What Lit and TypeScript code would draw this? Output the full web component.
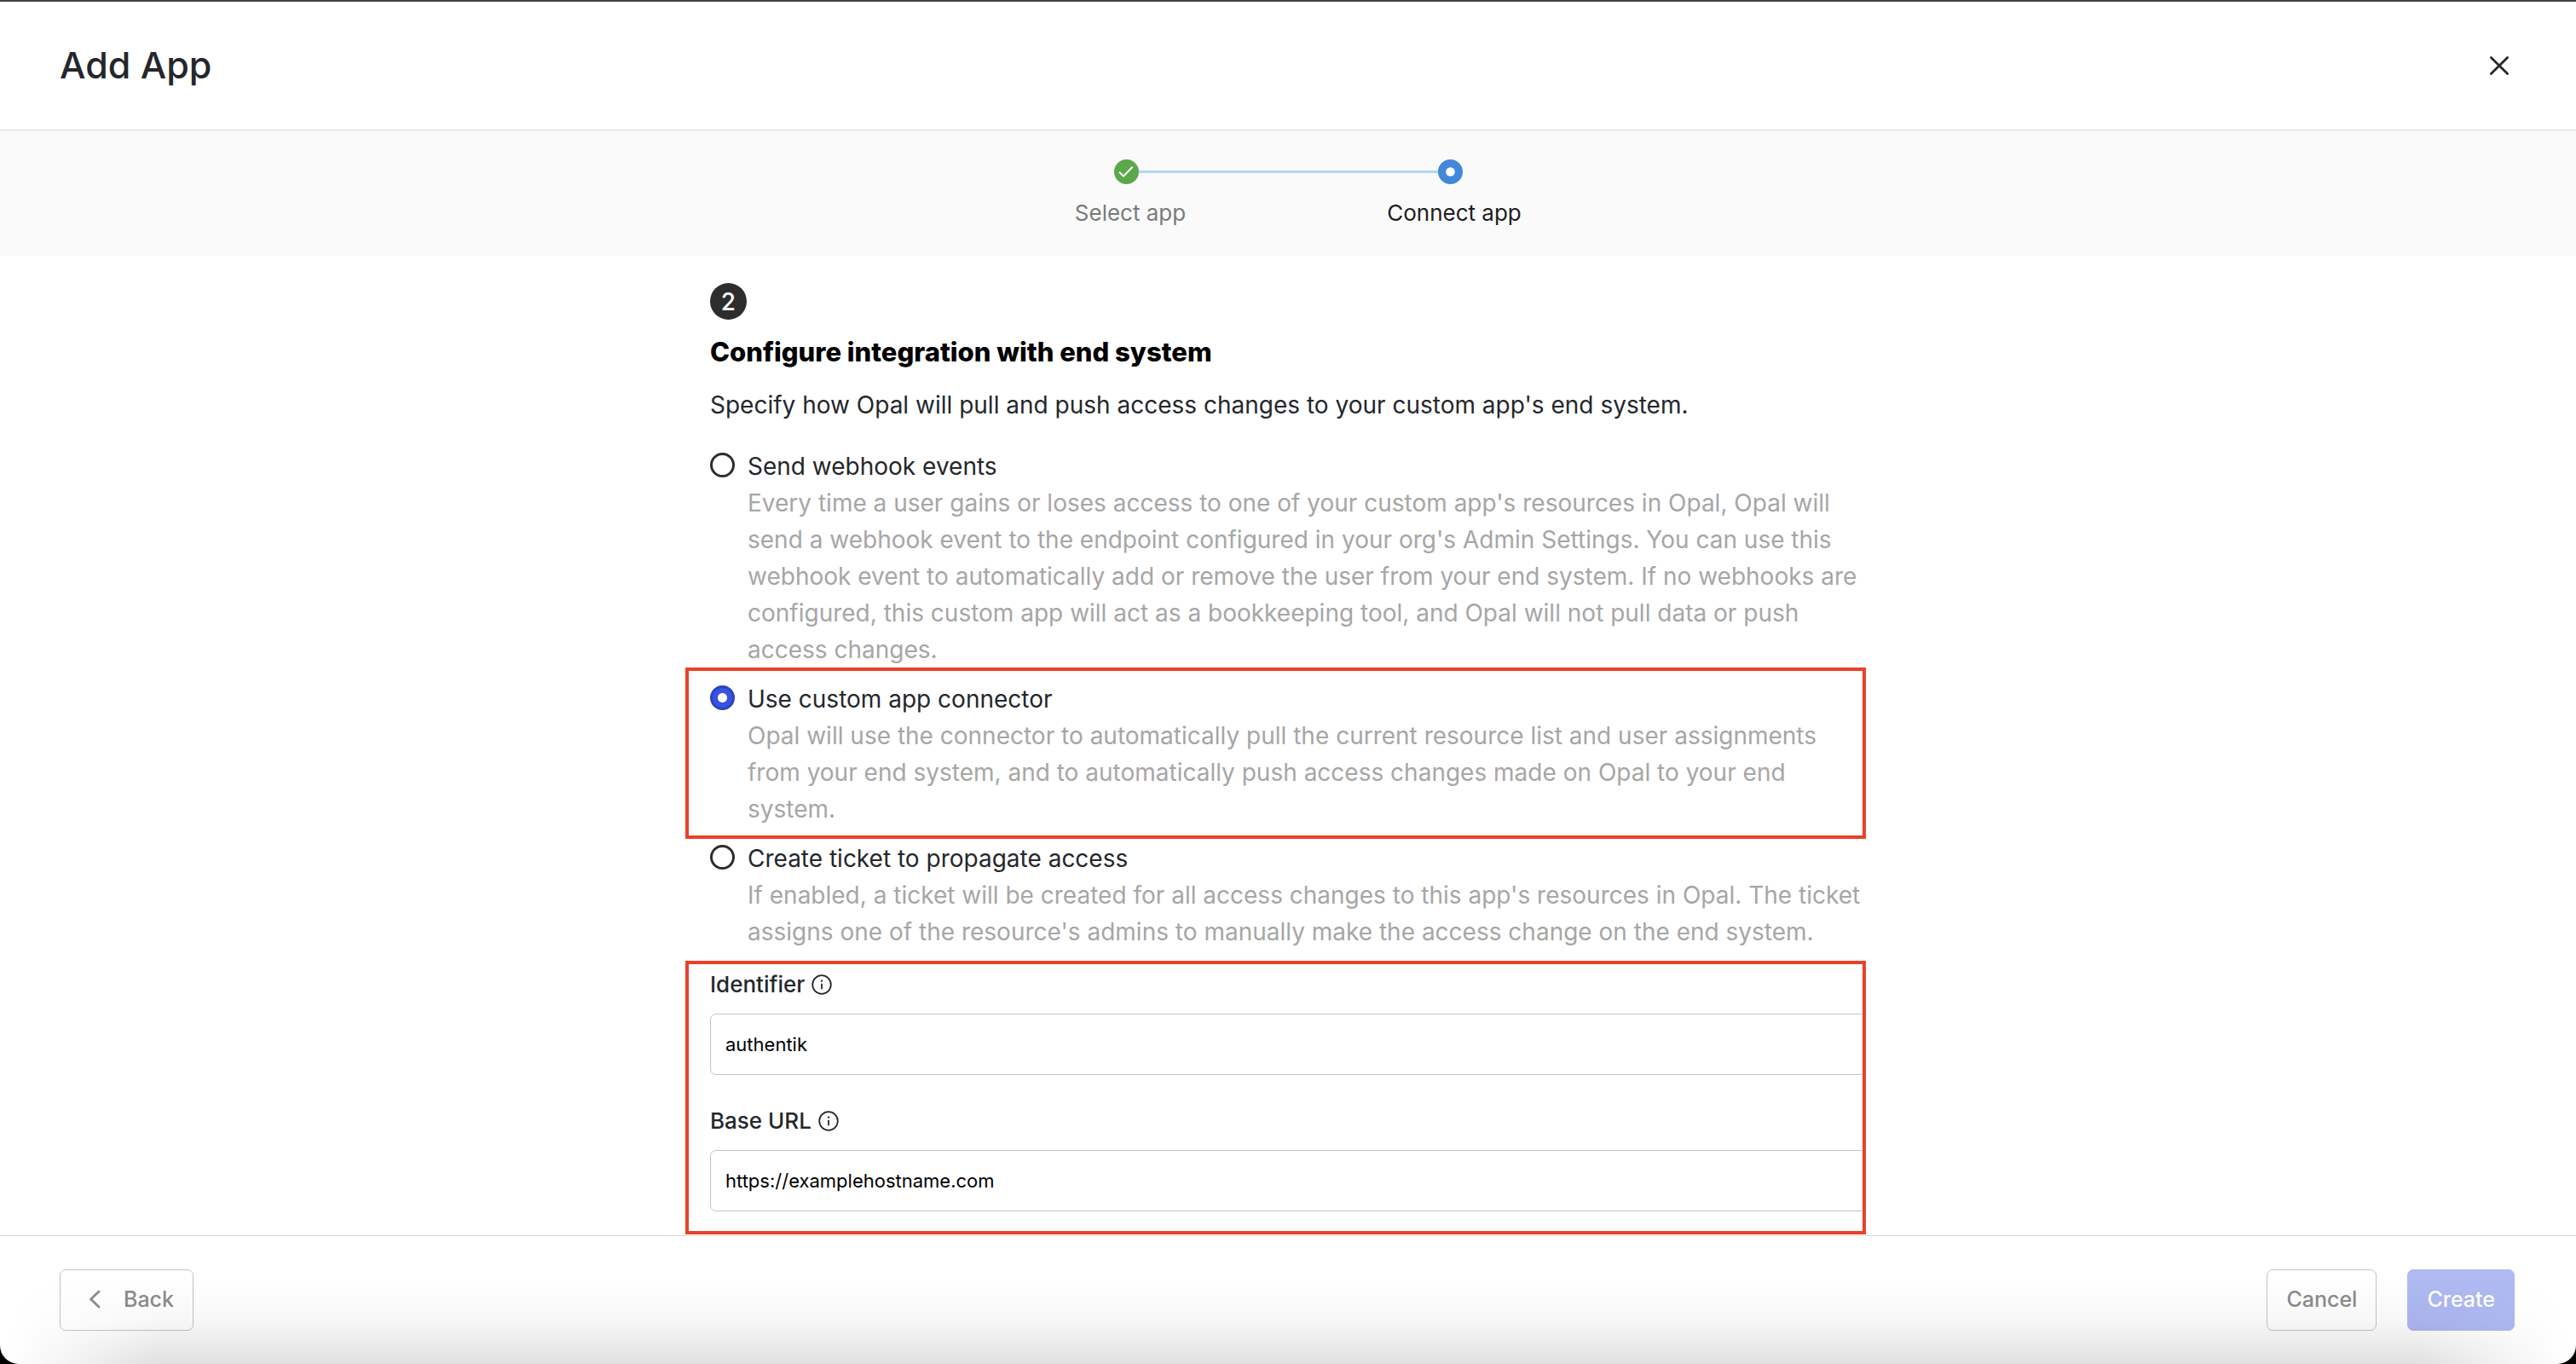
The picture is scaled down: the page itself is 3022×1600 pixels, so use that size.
import { LitElement, html, css, svg } from "lit";
import { customElement, property, state } from "lit/decorators.js";

interface Option {
  id: string;
  title: string;
  text: string;
  framed?: boolean;
}

const OPTIONS: Option[] = [
  {
    id: "webhook",
    title: "Send webhook events",
    text: "Every time a user gains or loses access to one of your custom app's resources in Opal, Opal will send a webhook event to the endpoint configured in your org's Admin Settings. You can use this webhook event to automatically add or remove the user from your end system. If no webhooks are configured, this custom app will act as a bookkeeping tool, and Opal will not pull data or push access changes.",
  },
  {
    id: "connector",
    title: "Use custom app connector",
    text: "Opal will use the connector to automatically pull the current resource list and user assignments from your end system, and to automatically push access changes made on Opal to your end system.",
    framed: true,
  },
  {
    id: "ticket",
    title: "Create ticket to propagate access",
    text: "If enabled, a ticket will be created for all access changes to this app's resources in Opal. The ticket assigns one of the resource's admins to manually make the access change on the end system.",
  },
];

const FIELDS = [
  { id: "identifier", label: "Identifier", value: "authentik" },
  { id: "base-url", label: "Base URL", value: "https://examplehostname.com" },
];

const infoIcon = svg`<svg viewBox="0 0 24 24" width="24" height="24" fill="none" aria-hidden="true">
  <circle cx="12" cy="12" r="10.8" stroke="#24272c" stroke-width="1.8"/>
  <circle cx="12" cy="7.6" r="1.2" fill="#24272c"/>
  <path d="M12 10.8v6.4" stroke="#24272c" stroke-width="1.8"/>
</svg>`;

@customElement("app-stepper")
export class AppStepper extends LitElement {
  static styles = css`
    :host {
      display: block;
      background: #fafafa;
    }
    .steps {
      list-style: none;
      margin: 0;
      padding: 34px 0 32px;
      display: flex;
      justify-content: center;
    }
    .step {
      flex: 0 1 380px;
      display: flex;
      flex-direction: column;
      gap: 16px;
    }
    .track {
      display: flex;
      align-items: center;
    }
    .line {
      flex: 1;
      height: 3px;
    }
    .on {
      background: #b3d6f8;
    }
    .marker {
      display: block;
      flex: none;
    }
    .label {
      padding-left: 10px;
      text-align: center;
      font-size: 26px;
      line-height: 36px;
      color: #7a7a7a;
    }
    .current {
      color: #1d1d1f;
    }
  `;

  render() {
    return html`
      <ol class="steps">
        <li class="step">
          <div class="track">
            <span class="line"></span>
            <svg class="marker" viewBox="0 0 29 29" width="29" height="29" fill="none" aria-hidden="true">
              <circle cx="14.5" cy="14.5" r="14.5" fill="#5ba84c" />
              <path d="M6 14.8l5 4.8L21.6 8.8" stroke="#fff" stroke-width="2" />
            </svg>
            <span class="line on"></span>
          </div>
          <span class="label">Select app</span>
        </li>
        <li class="step" aria-current="step">
          <div class="track">
            <span class="line on"></span>
            <svg class="marker" viewBox="0 0 29 29" width="29" height="29" aria-hidden="true">
              <circle cx="14.5" cy="14.5" r="14.5" fill="#4387d9" />
              <circle cx="14.5" cy="14.5" r="5.3" fill="#fff" />
            </svg>
            <span class="line"></span>
          </div>
          <span class="label current">Connect app</span>
        </li>
      </ol>
    `;
  }
}

@customElement("integration-form")
export class IntegrationForm extends LitElement {
  @property() selected = "connector";

  static styles = css`
    :host {
      display: block;
      max-width: 1356px;
      margin: 0 auto;
      padding: 32px 48px;
    }
    .badge {
      display: flex;
      align-items: center;
      justify-content: center;
      width: 43px;
      height: 43px;
      border-radius: 50%;
      background: #2d2d2d;
      color: #fff;
      font-size: 28px;
      font-weight: 500;
    }
    .heading {
      margin: 16px 0 0;
      font-size: 31px;
      line-height: 44px;
      font-weight: 800;
      color: #000;
    }
    .lead {
      margin: 19px 0 29px;
      font-size: 28px;
      line-height: 43px;
    }
    .options {
      margin: 0;
      padding: 0;
      border: 0;
      display: flex;
      flex-direction: column;
      gap: 15px;
    }
    .framed {
      position: relative;
    }
    .framed::after {
      content: "";
      position: absolute;
      inset: -16px 0 -13px -29px;
      border: 4px solid #ea4128;
      pointer-events: none;
    }
    .option {
      display: grid;
      grid-template-columns: 29px 1fr;
      column-gap: 15px;
      font-size: 28px;
      line-height: 43px;
    }
    .radio {
      appearance: none;
      box-sizing: border-box;
      width: 29px;
      height: 29px;
      margin: 5px 0 0;
      border: 3px solid #2d2d2d;
      border-radius: 50%;
      background: #fff;
    }
    .radio:checked {
      border-color: #2c44bd;
      background: radial-gradient(circle, #fff 5px, #3853e4 6px);
    }
    .text {
      grid-column: 2;
      margin: 0;
      color: #a6a6a6;
    }
    .fields {
      margin-top: 22px;
      display: flex;
      flex-direction: column;
      gap: 36px;
    }
    .fields.framed::after {
      inset: -10px 0 -27px -29px;
    }
    .caption {
      display: flex;
      align-items: center;
      gap: 8px;
      margin-bottom: 16px;
      font-size: 26px;
      line-height: 36px;
      font-weight: 500;
    }
    .input {
      box-sizing: border-box;
      display: block;
      width: 100%;
      height: 72px;
      padding: 0 17px;
      border: 1px solid #c4c4c4;
      border-radius: 7px;
      background: #fff;
      color: #000;
      font: inherit;
      font-size: 22px;
    }
  `;

  private choose(id: string) {
    this.selected = id;
  }

  render() {
    return html`
      <div class="badge">2</div>
      <h2 class="heading">Configure integration with end system</h2>
      <p class="lead">Specify how Opal will pull and push access changes to your custom app's end system.</p>
      <fieldset class="options" aria-label="Integration type">
        ${OPTIONS.map(
          (o) => html`
            <div class="option ${o.framed ? "framed" : ""}">
              <input
                class="radio"
                type="radio"
                name="integration"
                id=${o.id}
                aria-describedby="${o.id}-text"
                .checked=${this.selected === o.id}
                @change=${() => this.choose(o.id)}
              />
              <label for=${o.id}>${o.title}</label>
              <p class="text" id="${o.id}-text">${o.text}</p>
            </div>
          `,
        )}
      </fieldset>
      <div class="fields framed">
        ${FIELDS.map(
          (f) => html`
            <div>
              <label class="caption" for=${f.id}>${f.label} ${infoIcon}</label>
              <input class="input" type="text" id=${f.id} .value=${f.value} />
            </div>
          `,
        )}
      </div>
    `;
  }
}

@customElement("app-root")
export class AppRoot extends LitElement {
  @state() private open = true;

  static styles = css`
    :host {
      display: block;
      height: 100vh;
      background: #000;
      color: #24272c;
      font-family: Inter, "Liberation Sans", sans-serif;
    }
    .window {
      box-sizing: border-box;
      height: 100%;
      display: flex;
      flex-direction: column;
      overflow: hidden;
      border-top: 2px solid #434142;
      border-radius: 0 0 22px 22px;
      background: #fff;
    }
    .header {
      display: flex;
      align-items: center;
      justify-content: space-between;
      padding: 45px 70px;
      border-bottom: 1px solid #d9d9d9;
    }
    .title {
      margin: 0;
      padding-bottom: 2px;
      font-size: 43px;
      line-height: 58px;
      font-weight: 500;
    }
    .close {
      display: flex;
      padding: 8px;
      border: 0;
      background: none;
    }
    .content {
      flex: 1;
      min-height: 0;
      overflow: hidden;
    }
    .footer {
      display: flex;
      gap: 36px;
      padding: 39px 72px 39px 70px;
      border-top: 1px solid #d9d9d9;
      position: relative;
    }
    .footer::after {
      content: "";
      position: absolute;
      inset: auto 0 0 0;
      height: 100px;
      background: linear-gradient(to bottom, rgba(0, 0, 0, 0), rgba(0, 0, 0, 0.03) 50%, rgba(0, 0, 0, 0.12));
      mask-image: linear-gradient(to right, transparent 10px, #000 190px, #000 calc(100% - 190px), transparent calc(100% - 10px));
      pointer-events: none;
    }
    .button {
      box-sizing: border-box;
      height: 72px;
      display: flex;
      align-items: center;
      gap: 24px;
      padding: 0 22px 2px;
      border: 1px solid #c4c4c4;
      border-radius: 7px;
      background: #fff;
      color: #8c8c8c;
      font: inherit;
      font-size: 25px;
      font-weight: 500;
    }
    .back {
      margin-right: auto;
      padding-left: 32px;
    }
    .create {
      border-color: #afb9f2;
      background: #afb9f2;
      color: #fff;
    }
  `;

  render() {
    if (!this.open) return html``;
    return html`
      <div class="window">
        <header class="header">
          <h1 class="title">Add App</h1>
          <button class="close" type="button" aria-label="Close" @click=${() => (this.open = false)}>
            <svg viewBox="0 0 24 24" width="24" height="24" fill="none" aria-hidden="true">
              <path d="M2.4 2.4l19.2 19.2M21.6 2.4L2.4 21.6" stroke="#24272c" stroke-width="2.8" stroke-linecap="round" />
            </svg>
          </button>
        </header>
        <app-stepper></app-stepper>
        <main class="content"><integration-form></integration-form></main>
        <footer class="footer">
          <button class="button back" type="button">
            <svg viewBox="0 0 18 24" width="18" height="24" fill="none" aria-hidden="true">
              <path d="M13 3L3.6 12L13 21" stroke="#8c8c8c" stroke-width="2.8" stroke-linecap="round" stroke-linejoin="round" />
            </svg>
            Back
          </button>
          <button class="button" type="button">Cancel</button>
          <button class="button create" type="button">Create</button>
        </footer>
      </div>
    `;
  }
}
